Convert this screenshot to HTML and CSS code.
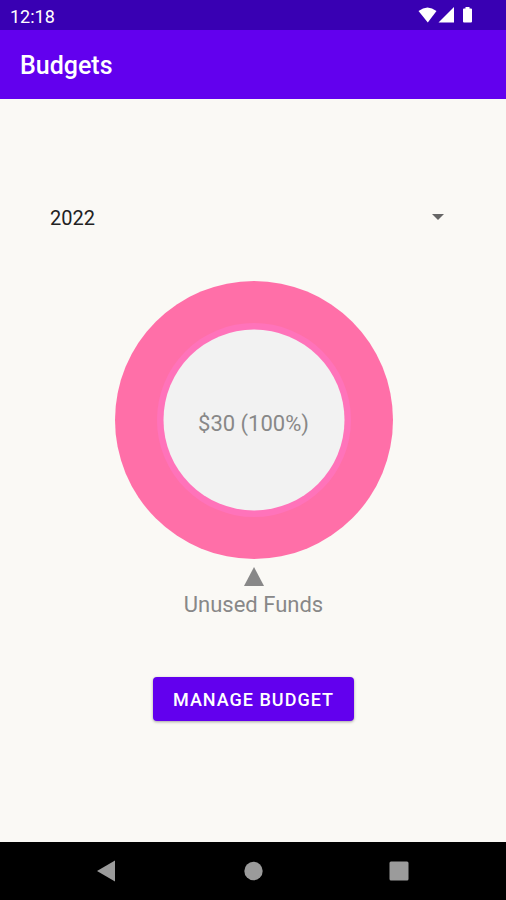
FILE: index.html
```html
<!DOCTYPE html>
<html lang="en">
<head>
<meta charset="utf-8">
<meta name="viewport" content="width=device-width, initial-scale=1">
<title>Budgets</title>
<link rel="stylesheet" href="styles.css">
</head>
<body>
<div class="status-bar">
  <span>12:18</span>
  <svg class="status-icons" width="56" height="18" viewBox="0 0 56 18" fill="currentColor" aria-hidden="true">
    <path d="M0.500 4Q9.500-3 18.500 4L9.800 15.500Z"/>
    <path d="M36 0V15.500H20.500Z"/>
    <path d="M46 1.500h1.500V0h4v1.500H53q1 0 1 1v12q0 1-1 1h-7q-1 0-1-1v-12q0-1 1-1z"/>
  </svg>
</div>
<header class="app-bar"><h1>Budgets</h1></header>
<main class="content">
  <div class="spinner">
    <select class="spinner-select" aria-label="Year"><option>2022</option></select>
    <svg class="spinner-arrow" width="12" height="6" viewBox="0 0 12 6" fill="currentColor" aria-hidden="true"><path d="M0 0H12L6 6Z"/></svg>
  </div>
  <figure class="chart">
    <div class="donut">
      <svg class="donut-ring" width="278" height="278" viewBox="0 0 278 278" aria-hidden="true">
        <circle cx="139" cy="139" r="139" fill="#ff6fa8"/>
        <circle cx="139" cy="139" r="97" fill="#ff73ba"/>
        <circle cx="139" cy="139" r="90.500" fill="#f2f2f2"/>
      </svg>
      <span class="donut-value">$30 (100%)</span>
    </div>
    <svg class="pointer" width="20" height="20" viewBox="0 0 20 20" fill="currentColor" aria-hidden="true"><path d="M10 0L20 19H0Z"/></svg>
    <figcaption>Unused Funds</figcaption>
  </figure>
  <button class="manage" type="button">MANAGE BUDGET</button>
</main>
<nav class="nav-bar" aria-label="System">
  <button type="button" aria-label="Back"><svg width="20" height="22" viewBox="0 0 20 22" fill="currentColor"><path d="M0 11L18 0.500V21.500Z"/></svg></button>
  <button type="button" aria-label="Home"><svg width="20" height="20" viewBox="0 0 20 20" fill="currentColor"><circle cx="10.500" cy="10" r="9.200"/></svg></button>
  <button type="button" aria-label="Overview"><svg width="20" height="20" viewBox="0 0 20 20" fill="currentColor"><rect x="0.500" y="0.500" width="19" height="19" rx="1.500"/></svg></button>
</nav>
</body>
</html>
```
FILE: styles.css
```css
* {
  box-sizing: border-box;
}

body {
  margin: 0;
  min-height: 100vh;
  display: flex;
  flex-direction: column;
  background: #faf9f5;
  font-family: Roboto, "Liberation Sans", sans-serif;
}

.status-bar {
  display: flex;
  align-items: center;
  justify-content: space-between;
  height: 30px;
  padding: 2px 32px 0 10px;
  background: #3900b3;
  color: #fff;
  font-size: 18px;
}

.app-bar {
  display: flex;
  align-items: center;
  height: 69px;
  padding: 2px 20px 0;
  background: #6200ee;
  color: #fff;
}

.app-bar h1 {
  margin: 0;
  font-size: 25px;
  font-weight: 500;
}

.content {
  flex: 1;
  display: flex;
  flex-direction: column;
  align-items: center;
  padding: 98px 49px 40px 50px;
}

.spinner {
  display: grid;
  align-items: center;
  width: 100%;
}

.spinner > * {
  grid-area: 1 / 1;
}

.spinner-select {
  appearance: none;
  width: 100%;
  height: 40px;
  padding: 2px 0 0;
  border: 0;
  background: none;
  color: #222;
  font: 20px Roboto, "Liberation Sans", sans-serif;
}

.spinner-arrow {
  justify-self: end;
  margin-right: 13px;
  color: #666;
  pointer-events: none;
}

.chart {
  display: flex;
  flex-direction: column;
  align-items: center;
  margin: 44px 0 0;
  color: #888;
  font-size: 22px;
  font-weight: 400;
  line-height: 28px;
}

.donut {
  display: grid;
  place-items: center;
}

.donut > * {
  grid-area: 1 / 1;
}

.donut-value {
  padding-top: 8px;
}

.pointer {
  margin: 8px 0 4px;
}

.manage {
  height: 44px;
  margin-top: 58px;
  padding: 0 20px;
  border: 0;
  border-radius: 4px;
  background: #6200ee;
  box-shadow: 0 1px 3px rgba(0, 0, 0, 0.35);
  color: #fff;
  font: 500 18px Roboto, "Liberation Sans", sans-serif;
  letter-spacing: 1px;
}

.nav-bar {
  display: flex;
  justify-content: center;
  gap: 106px;
  height: 58px;
  background: #000;
}

.nav-bar button {
  display: grid;
  place-items: center;
  width: 40px;
  padding: 0;
  border: 0;
  background: none;
  color: #9b9b9b;
}
```
